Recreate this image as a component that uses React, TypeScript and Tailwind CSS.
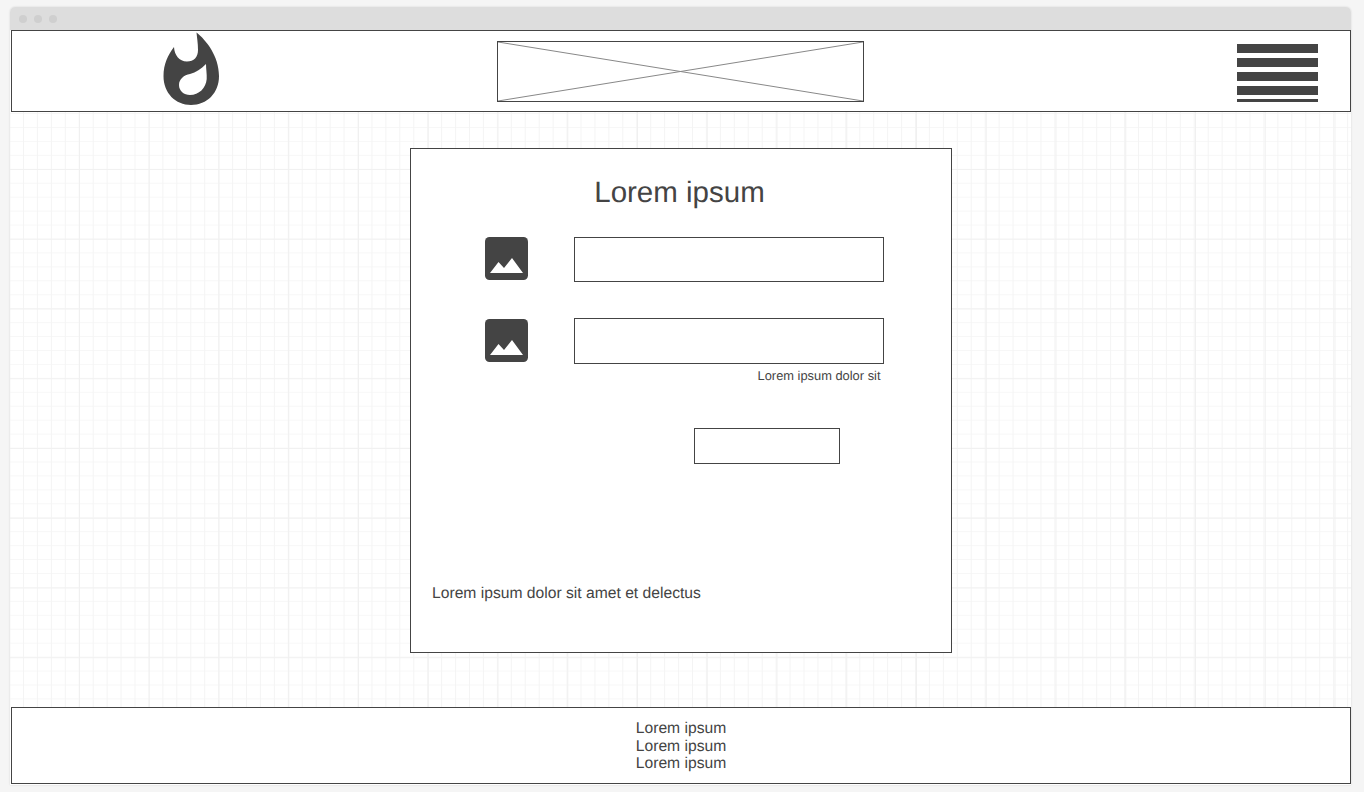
import React from "react";

function Flame() {
  return (
    <svg width="58" height="76" viewBox="0 0 58 76" className="block">
      <path
        fillRule="evenodd"
        fill="#444444"
        d="M34.5 1.5 C44 9 57 25 57 45 C57 62 45 74 29 74 C13.5 74 1.5 62 1.5 45 C1.5 33 6 24 12 16 C12.5 24 17 30.5 25 30.5 C32 30.5 36 26 36 19 C36 12 35 7 34.5 1.5 Z M44 33 C39 38 34 41.5 28 43 C22 44 17 48 17 54 C17 60 22 64 28 64 C37 64 44 57 44.7 48 C45 43 44 38 44 33 Z"
      />
    </svg>
  );
}

function ImageIcon() {
  return (
    <svg width="43" height="43" viewBox="0 0 43 43" className="block shrink-0">
      <rect x="0" y="0" width="43" height="43" rx="4.5" fill="#444444" />
      <path d="M5 36 L13.5 25 L19 31 L27 21 L38 36 Z" fill="#ffffff" />
    </svg>
  );
}

function Row({ boxClass, iconClass }: { boxClass: string; iconClass: string }) {
  return (
    <div className="flex items-start">
      <div className={`ml-[74px] mr-[46px] ${iconClass}`}>
        <ImageIcon />
      </div>
      <div className={`w-[310px] border border-[#444444] bg-white ${boxClass}`} />
    </div>
  );
}

export default function App() {
  return (
    <div
      className="h-[792px] w-[1364px] overflow-hidden bg-[#f5f5f5] pt-[7px] pl-[10px] pr-[13px] text-[#444444] [text-rendering:geometricPrecision]"
      style={{ fontFamily: '"Liberation Sans", Arial, sans-serif' }}
    >
      <div className="flex h-[778px] w-[1341px] flex-col rounded-t-[5px] bg-white shadow-[0_0_2px_rgba(0,0,0,0.15)]">
        <div className="flex h-[23px] shrink-0 items-center gap-[7px] rounded-t-[5px] bg-[#dddddd] pl-[9px]">
          <span className="h-[8px] w-[8px] rounded-full bg-[#cfcfcf]" />
          <span className="h-[8px] w-[8px] rounded-full bg-[#cfcfcf]" />
          <span className="h-[8px] w-[8px] rounded-full bg-[#cfcfcf]" />
        </div>

        <header className="ml-px flex h-[82px] w-[1340px] shrink-0 border border-[#444444] bg-white">
          <div className="ml-[150px]">
            <Flame />
          </div>
          <div className="relative ml-[277px] mt-[10px] h-[61px] w-[367px] border border-[#444444]">
            <svg width="365" height="59" viewBox="0 0 365 59" className="block">
              <line x1="0" y1="0" x2="365" y2="59" stroke="#888888" strokeWidth="1" />
              <line x1="0" y1="59" x2="365" y2="0" stroke="#888888" strokeWidth="1" />
            </svg>
          </div>
          <div className="ml-[373px] mt-[13px] flex h-[58px] w-[81px] flex-col">
            <div className="h-[9px] bg-[#444444]" />
            <div className="mt-[5px] h-[9px] bg-[#444444]" />
            <div className="mt-[5px] h-[9px] bg-[#444444]" />
            <div className="mt-[5px] h-[9px] bg-[#444444]" />
            <div className="mt-[4px] h-[3px] bg-[#444444]" />
          </div>
        </header>

        <main className="flex h-[595px] shrink-0 justify-center bg-white bg-[linear-gradient(to_right,#f0f0f0_1px,transparent_1px),linear-gradient(to_bottom,#f1f1f1_1px,transparent_1px),linear-gradient(to_right,#f4f4f4_1px,transparent_1px),linear-gradient(to_bottom,#f7f7f7_1px,transparent_1px)] bg-[length:69.75px_69.75px,69.75px_69.75px,13.95px_13.95px,13.95px_13.95px] bg-[position:69px_0,0_57px,13px_0,0_15px] pt-[36px]">
          <section className="flex h-[505px] w-[542px] flex-col border border-[#444444] bg-white">
            <h1 className="mt-[26px] mr-[2px] text-center text-[29.5px] leading-[36px] font-normal">Lorem ipsum</h1>
            <div className="mt-[26px]">
              <Row boxClass="h-[45px]" iconClass="mt-0" />
            </div>
            <div className="mt-[36px]">
              <Row boxClass="h-[46px]" iconClass="mt-px" />
            </div>
            <p className="mr-[70px] mt-[4px] text-right text-[12.87px] leading-[16px]">Lorem ipsum dolor sit</p>
            <div className="ml-[283px] mt-[44px] h-[36px] w-[146px] border border-[#444444] bg-white" />
            <p className="ml-[21.5px] mt-[120px] text-[15.66px] leading-[20px]">Lorem ipsum dolor sit amet et delectus</p>
          </section>
        </main>

        <footer className="ml-px flex h-[77px] w-[1340px] shrink-0 flex-col items-center border border-[#444444] bg-white pt-[12px] text-[15.66px] leading-[17.5px]">
          <span>Lorem ipsum</span>
          <span>Lorem ipsum</span>
          <span>Lorem ipsum</span>
        </footer>
      </div>
    </div>
  );
}
